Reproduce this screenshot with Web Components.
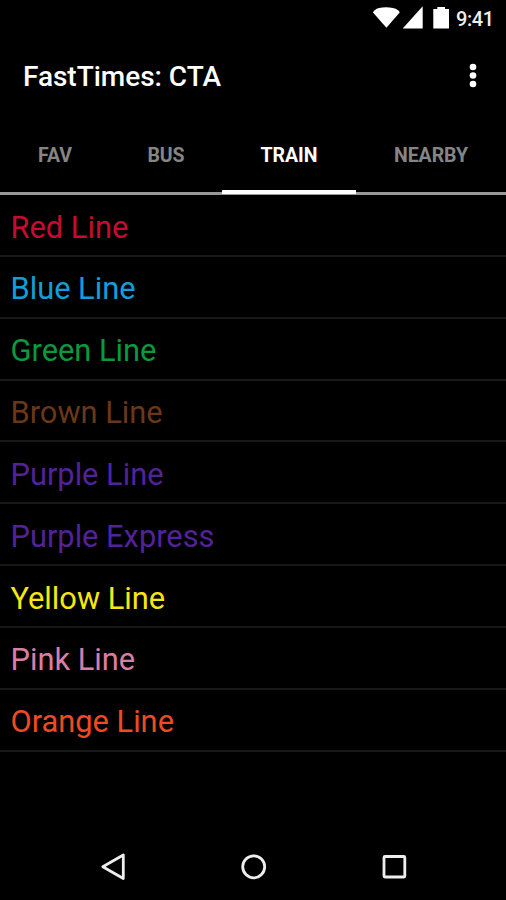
<!DOCTYPE html>
<html lang="en"><head><meta charset="utf-8"><title>FastTimes: CTA</title>
<style>html,body{margin:0;background:#000}body{width:506px;height:900px;overflow:hidden;font-family:Roboto,sans-serif}</style></head>
<body><transit-app></transit-app>
<script>
const define=(name,html)=>customElements.define(name,class extends HTMLElement{constructor(){super();this.attachShadow({mode:'open'}).innerHTML=html;}});
define('status-bar',`<style>:host{display:flex;height:36px;align-items:center;justify-content:flex-end;padding-right:11px;box-sizing:border-box;color:#eee;font-size:20px;font-weight:500;letter-spacing:-.4px}svg{display:block;flex:none}span{width:39px;margin-left:6px;white-space:nowrap;line-height:36px;padding-top:2px}</style><svg width="78" height="36" viewBox="372 0 78 36" fill="#fff"><path d="M373 12.500Q374 9.500 379 8Q386 6.500 393 8Q399 9.500 399.700 12.500L386.400 27.800Z"/><path d="M422.700 6.300V28.500H402.700Z"/><path d="M433.300 9H437.300V7H445V9H449V28.500H433.300Z"/></svg><span>9:41</span>`);
define('app-header',`<style>:host{display:flex;height:80px;align-items:center;justify-content:space-between;padding:0 28px 0 23px;box-sizing:border-box;color:#fff}h1{font-size:28px;font-weight:500;margin:0;line-height:80px;letter-spacing:-.03px;padding-top:1px}svg{display:block}</style><h1><slot></slot></h1><svg width="10" height="26" viewBox="0 0 10 26" fill="#fff"><circle cx="5" cy="4" r="3.300"/><circle cx="5" cy="12.500" r="3.300"/><circle cx="5" cy="21" r="3.300"/></svg>`);
define('tab-bar',`<style>:host{display:grid;grid-template-columns:110px 112px 134px 150px;height:79px;box-sizing:border-box;background:linear-gradient(#999,#999) bottom/100% 3px no-repeat}</style><slot></slot>`);
define('tab-item',`<style>:host{display:flex;justify-content:center;box-sizing:border-box;height:78px;color:#858585;font-size:19.500px;font-weight:700;line-height:79px;letter-spacing:-.05px}:host([selected]){color:#fff;border-bottom:4px solid #fff}</style><slot></slot>`);
define('line-item',`<style>:host{display:block;box-sizing:border-box;height:61.850px;padding:1.500px 0 0 10.500px;border-bottom:2px solid #181818;font-size:30.800px;line-height:62px;white-space:nowrap}</style><slot></slot>`);
define('nav-bar',`<style>:host{display:block;height:66px}svg{display:block}</style><svg width="506" height="66" viewBox="0 834 506 66" fill="none" stroke="#eee" stroke-width="2.800"><path d="M123.300 855V878.500L102.800 866.700Z" stroke-linejoin="round"/><circle cx="253.700" cy="866.800" r="11"/><rect x="384" y="856.500" width="20.800" height="20.500" rx="1"/></svg>`);
define('transit-app',`<style>:host{display:flex;flex-direction:column;height:900px;background:#000}main{flex:1}</style><status-bar></status-bar><app-header>FastTimes: CTA</app-header><tab-bar><tab-item>FAV</tab-item><tab-item>BUS</tab-item><tab-item selected>TRAIN</tab-item><tab-item>NEARBY</tab-item></tab-bar><main>${[['Red Line','#c60c30'],['Blue Line','#119fda'],['Green Line','#0a993e'],['Brown Line','#6a3818'],['Purple Line','#522398'],['Purple Express','#522398'],['Yellow Line','#f9e711'],['Pink Line','#da7ea6'],['Orange Line','#f04a20']].map(([n,c])=>`<line-item style="color:${c}">${n}</line-item>`).join('')}</main><nav-bar></nav-bar>`);
</script></body></html>
